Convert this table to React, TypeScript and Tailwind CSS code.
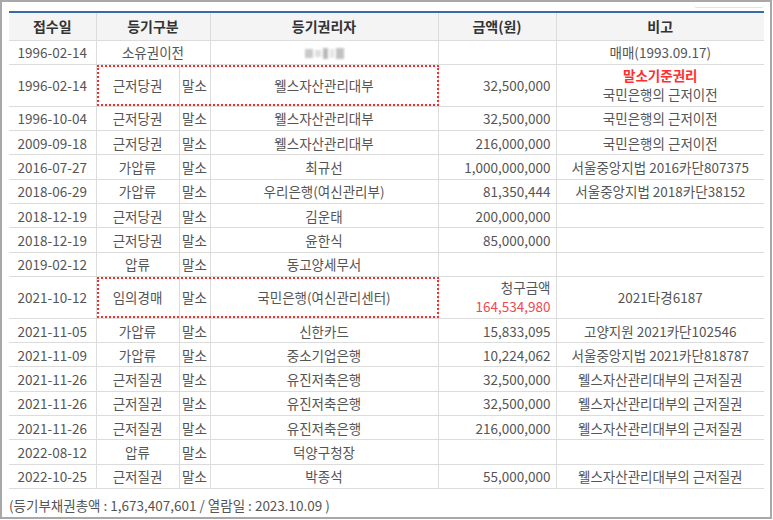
import React from "react";

type Row = {
  date: string;
  kind: string;
  status?: string;
  holder: string;
  amount?: React.ReactNode;
  note?: React.ReactNode;
  tall?: boolean;
  boxed?: boolean;
  blurred?: boolean;
};

const rows: Row[] = [
  { date: "1996-02-14", kind: "소유권이전", holder: "", blurred: true, note: "매매(1993.09.17)" },
  {
    date: "1996-02-14",
    kind: "근저당권",
    status: "말소",
    holder: "웰스자산관리대부",
    amount: "32,500,000",
    tall: true,
    boxed: true,
    note: (
      <>
        <span className="block font-bold leading-[19.5px] text-[#ff2f2f]">말소기준권리</span>
        <span className="block leading-[19.5px]">국민은행의 근저이전</span>
      </>
    ),
  },
  { date: "1996-10-04", kind: "근저당권", status: "말소", holder: "웰스자산관리대부", amount: "32,500,000", note: "국민은행의 근저이전" },
  { date: "2009-09-18", kind: "근저당권", status: "말소", holder: "웰스자산관리대부", amount: "216,000,000", note: "국민은행의 근저이전" },
  { date: "2016-07-27", kind: "가압류", status: "말소", holder: "최규선", amount: "1,000,000,000", note: "서울중앙지법 2016카단807375" },
  { date: "2018-06-29", kind: "가압류", status: "말소", holder: "우리은행(여신관리부)", amount: "81,350,444", note: "서울중앙지법 2018카단38152" },
  { date: "2018-12-19", kind: "근저당권", status: "말소", holder: "김운태", amount: "200,000,000" },
  { date: "2018-12-19", kind: "근저당권", status: "말소", holder: "윤한식", amount: "85,000,000" },
  { date: "2019-02-12", kind: "압류", status: "말소", holder: "동고양세무서" },
  {
    date: "2021-10-12",
    kind: "임의경매",
    status: "말소",
    holder: "국민은행(여신관리센터)",
    tall: true,
    boxed: true,
    amount: (
      <>
        <span className="block leading-[19.5px]">청구금액</span>
        <span className="block leading-[19.5px] text-[#f0474f]">164,534,980</span>
      </>
    ),
    note: "2021타경6187",
  },
  { date: "2021-11-05", kind: "가압류", status: "말소", holder: "신한카드", amount: "15,833,095", note: "고양지원 2021카단102546" },
  { date: "2021-11-09", kind: "가압류", status: "말소", holder: "중소기업은행", amount: "10,224,062", note: "서울중앙지법 2021카단818787" },
  { date: "2021-11-26", kind: "근저질권", status: "말소", holder: "유진저축은행", amount: "32,500,000", note: "웰스자산관리대부의 근저질권" },
  { date: "2021-11-26", kind: "근저질권", status: "말소", holder: "유진저축은행", amount: "32,500,000", note: "웰스자산관리대부의 근저질권" },
  { date: "2021-11-26", kind: "근저질권", status: "말소", holder: "유진저축은행", amount: "216,000,000", note: "웰스자산관리대부의 근저질권" },
  { date: "2022-08-12", kind: "압류", status: "말소", holder: "덕양구청장" },
  { date: "2022-10-25", kind: "근저질권", status: "말소", holder: "박종석", amount: "55,000,000", note: "웰스자산관리대부의 근저질권" },
];

const cell = "border-b border-[#dcdcdc] p-0 align-middle leading-[18px]";

function BlurredName() {
  return (
    <span className="inline-flex items-center gap-[2px] blur-[1.2px]">
      <span className="h-[9px] w-[8px] bg-[#c9c9c9]" />
      <span className="h-[7px] w-[6px] bg-[#dedede]" />
      <span className="h-[11px] w-[5px] bg-[#b9b9b9]" />
      <span className="h-[9px] w-[4px] bg-[#e4e4e4]" />
      <span className="h-[11px] w-[8px] bg-[#c2c2c2]" />
    </span>
  );
}

export default function App() {
  return (
    <div
      className="h-[519px] w-[772px] border-2 border-[#a8a8a8] bg-white text-[13.5px] text-[#555]"
      style={{ fontFamily: '"Noto Sans CJK KR", "Noto Sans", sans-serif' }}
    >
      <div className="flex h-[9px] justify-end pr-[6px]">
        <div className="mt-[3px] h-[3px] w-[70px] rounded-b-[3px] border-b border-[#dbe3ee]" />
      </div>
      <div className="px-[7px]">
        <table className="w-[755px] table-fixed border-collapse border-t-2 border-[#3a6aa8]">
          <colgroup>
            <col className="w-[87px]" />
            <col className="w-[83px]" />
            <col className="w-[31px]" />
            <col className="w-[228px]" />
            <col className="w-[118px]" />
            <col className="w-[208px]" />
          </colgroup>
          <thead>
            <tr className="h-[28px] bg-[#f4f4f4] text-[14px] font-bold text-[#333]">
              <th className={`${cell} border-r`}>접수일</th>
              <th colSpan={2} className={`${cell} border-r`}>
                등기구분
              </th>
              <th className={`${cell} border-r`}>등기권리자</th>
              <th className={`${cell} border-r`}>금액(원)</th>
              <th className={cell}>비고</th>
            </tr>
          </thead>
          <tbody>
            {rows.map((r, i) => (
              <tr key={i} className={r.tall ? "h-[42px]" : "h-[24.3px]"}>
                <td className={`${cell} border-r text-center`}>{r.date}</td>
                {r.status ? (
                  <>
                    <td className={`${cell} relative border-r text-center`}>
                      {r.kind}
                      {r.boxed && (
                        <span className="pointer-events-none absolute left-0 top-0 h-full w-[342px] border-2 border-dotted border-[#ff2b2b]" />
                      )}
                    </td>
                    <td className={`${cell} border-r text-center`}>{r.status}</td>
                  </>
                ) : (
                  <td colSpan={2} className={`${cell} border-r text-center`}>
                    {r.kind}
                  </td>
                )}
                <td className={`${cell} border-r text-center`}>
                  {r.blurred ? <BlurredName /> : r.holder}
                </td>
                <td className={`${cell} border-r pr-[5px] text-right`}>{r.amount}</td>
                <td className={`${cell} text-center`}>{r.note}</td>
              </tr>
            ))}
          </tbody>
        </table>
        <p className="mt-[6px] text-[13.5px] text-[#555]">
          (등기부채권총액 : 1,673,407,601 / 열람일 : 2023.10.09 )
        </p>
      </div>
    </div>
  );
}
